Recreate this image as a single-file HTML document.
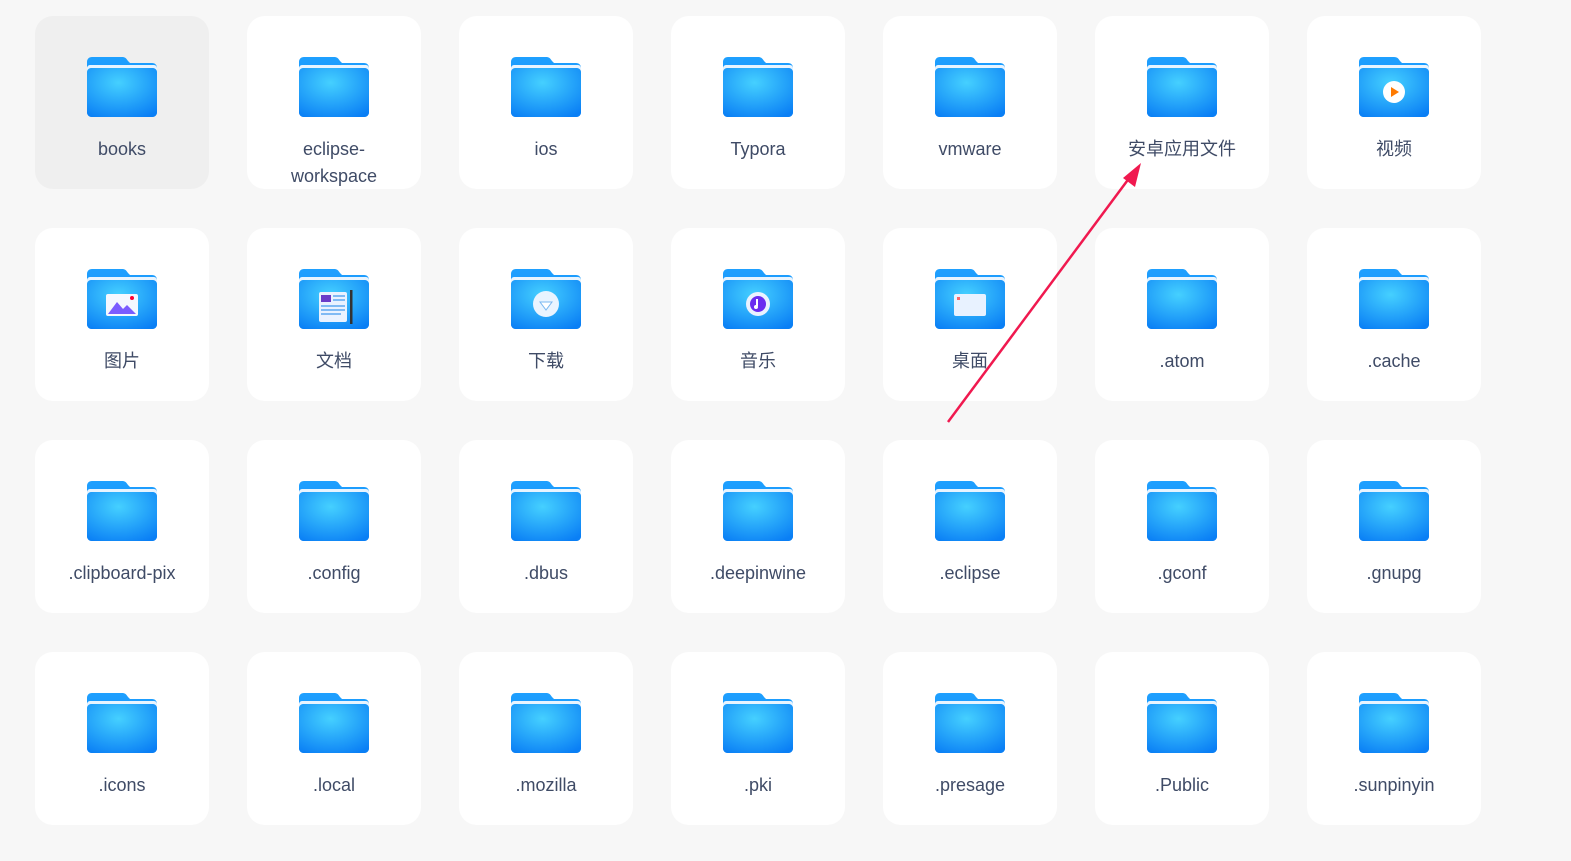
<!DOCTYPE html><html><head><meta charset="utf-8"><style>
body{margin:0;width:1571px;height:861px;background:#f7f7f7;position:relative;overflow:hidden;font-family:"Liberation Sans","Noto Sans CJK SC",sans-serif}
.c{position:absolute;width:174px;height:173px;background:#fff;border-radius:18px}
.c.sel{background:#efefef}
.c svg.f{position:absolute;left:52px;top:40px;width:70px;height:62px}
.c .t{position:absolute;left:0;right:0;top:120px;text-align:center;font-size:18px;line-height:27px;color:#3f4b66}
</style></head><body>
<svg width="0" height="0" style="position:absolute"><defs>
<radialGradient id="g" cx="0.45" cy="0.3" r="0.8"><stop offset="0" stop-color="#45d0ff"/><stop offset="1" stop-color="#0a7ff5"/></radialGradient>
<linearGradient id="tb" x1="0" y1="0" x2="0" y2="1"><stop offset="0" stop-color="#1fa0ff"/><stop offset="1" stop-color="#0b86f5"/></linearGradient>
<symbol id="fo" viewBox="0 0 70 62">
<path d="M5 1h30c3 0 4 1 6 4l2 2h22c3 0 5 2 5 5v44c0 3-2 5-5 5H5c-3 0-5-2-5-5V6C0 3 2 1 5 1z" fill="url(#tb)"/>
<path d="M3 9h64c1.5 0 3 1.5 3 3v4H0v-4c0-1.5 1.5-3 3-3z" fill="#e8f4ff"/>
<path d="M4 12h62c2 0 4 2 4 4v40c0 3-2 5-5 5H5c-3 0-5-2-5-5V16c0-2 2-4 4-4z" fill="url(#g)"/>
</symbol></defs></svg>
<div id="grid"></div>
<script>
const n=[["books","eclipse-<br>workspace","ios","Typora","vmware","安卓应用文件","视频"],["图片","文档","下载","音乐","桌面",".atom",".cache"],[".clipboard-pix",".config",".dbus",".deepinwine",".eclipse",".gconf",".gnupg"],[".icons",".local",".mozilla",".pki",".presage",".Public",".sunpinyin"]];
const ov={"视频":'<circle cx="35" cy="36" r="11" fill="#fff"/><path d="M32 31l8 5-8 5z" fill="#ff7a00"/>',"图片":'<rect x="19" y="26" width="32" height="22" rx="2" fill="#f4f8ff"/><path d="M21 46l9-12 6 7 4-4 9 9z" fill="#7a5cff"/><circle cx="45" cy="30" r="2" fill="#f03"/>',"文档":'<rect x="20" y="24" width="28" height="30" rx="2" fill="#e9f2ff"/><rect x="22" y="27" width="10" height="7" fill="#6a3cc8"/><path d="M34 28h12M34 32h12M22 38h24M22 42h24M22 46h20" stroke="#5ca8f0" stroke-width="1.5"/><rect x="51" y="22" width="2.5" height="34" fill="#333"/>',"下载":'<circle cx="35" cy="36" r="13" fill="#e8f4ff"/><path d="M29 34h12l-6 8z" fill="#fff" stroke="#7ab8f0"/>',"音乐":'<circle cx="35" cy="36" r="12" fill="#eaf2ff"/><circle cx="35" cy="36" r="8" fill="#6a2cf0"/><path d="M34 31v7" stroke="#fff" stroke-width="2"/><circle cx="33" cy="39" r="2" fill="#fff"/>',"桌面":'<rect x="19" y="26" width="32" height="22" rx="2" fill="#e8f2ff"/><rect x="22" y="29" width="3" height="3" fill="#f66"/><path d="M21 44h28" stroke="url(#g)" stroke-width="2"/>'};
let h="";
n.forEach((r,i)=>r.forEach((t,j)=>{h+=`<div class="c${i==0&&j==0?' sel':''}" style="left:${35+212*j}px;top:${16+212*i}px"><svg class="f" viewBox="0 0 70 62"><use href="#fo"/>${ov[t]||''}</svg><div class="t">${t}</div></div>`}));
document.getElementById("grid").innerHTML=h;
</script>
<svg style="position:absolute;left:0;top:0" width="1571" height="861"><line x1="948" y1="422" x2="1130" y2="177" stroke="#f0194f" stroke-width="2.5"/><path d="M1141 163l-6 24-12-9z" fill="#f0194f"/></svg>
</body></html>
